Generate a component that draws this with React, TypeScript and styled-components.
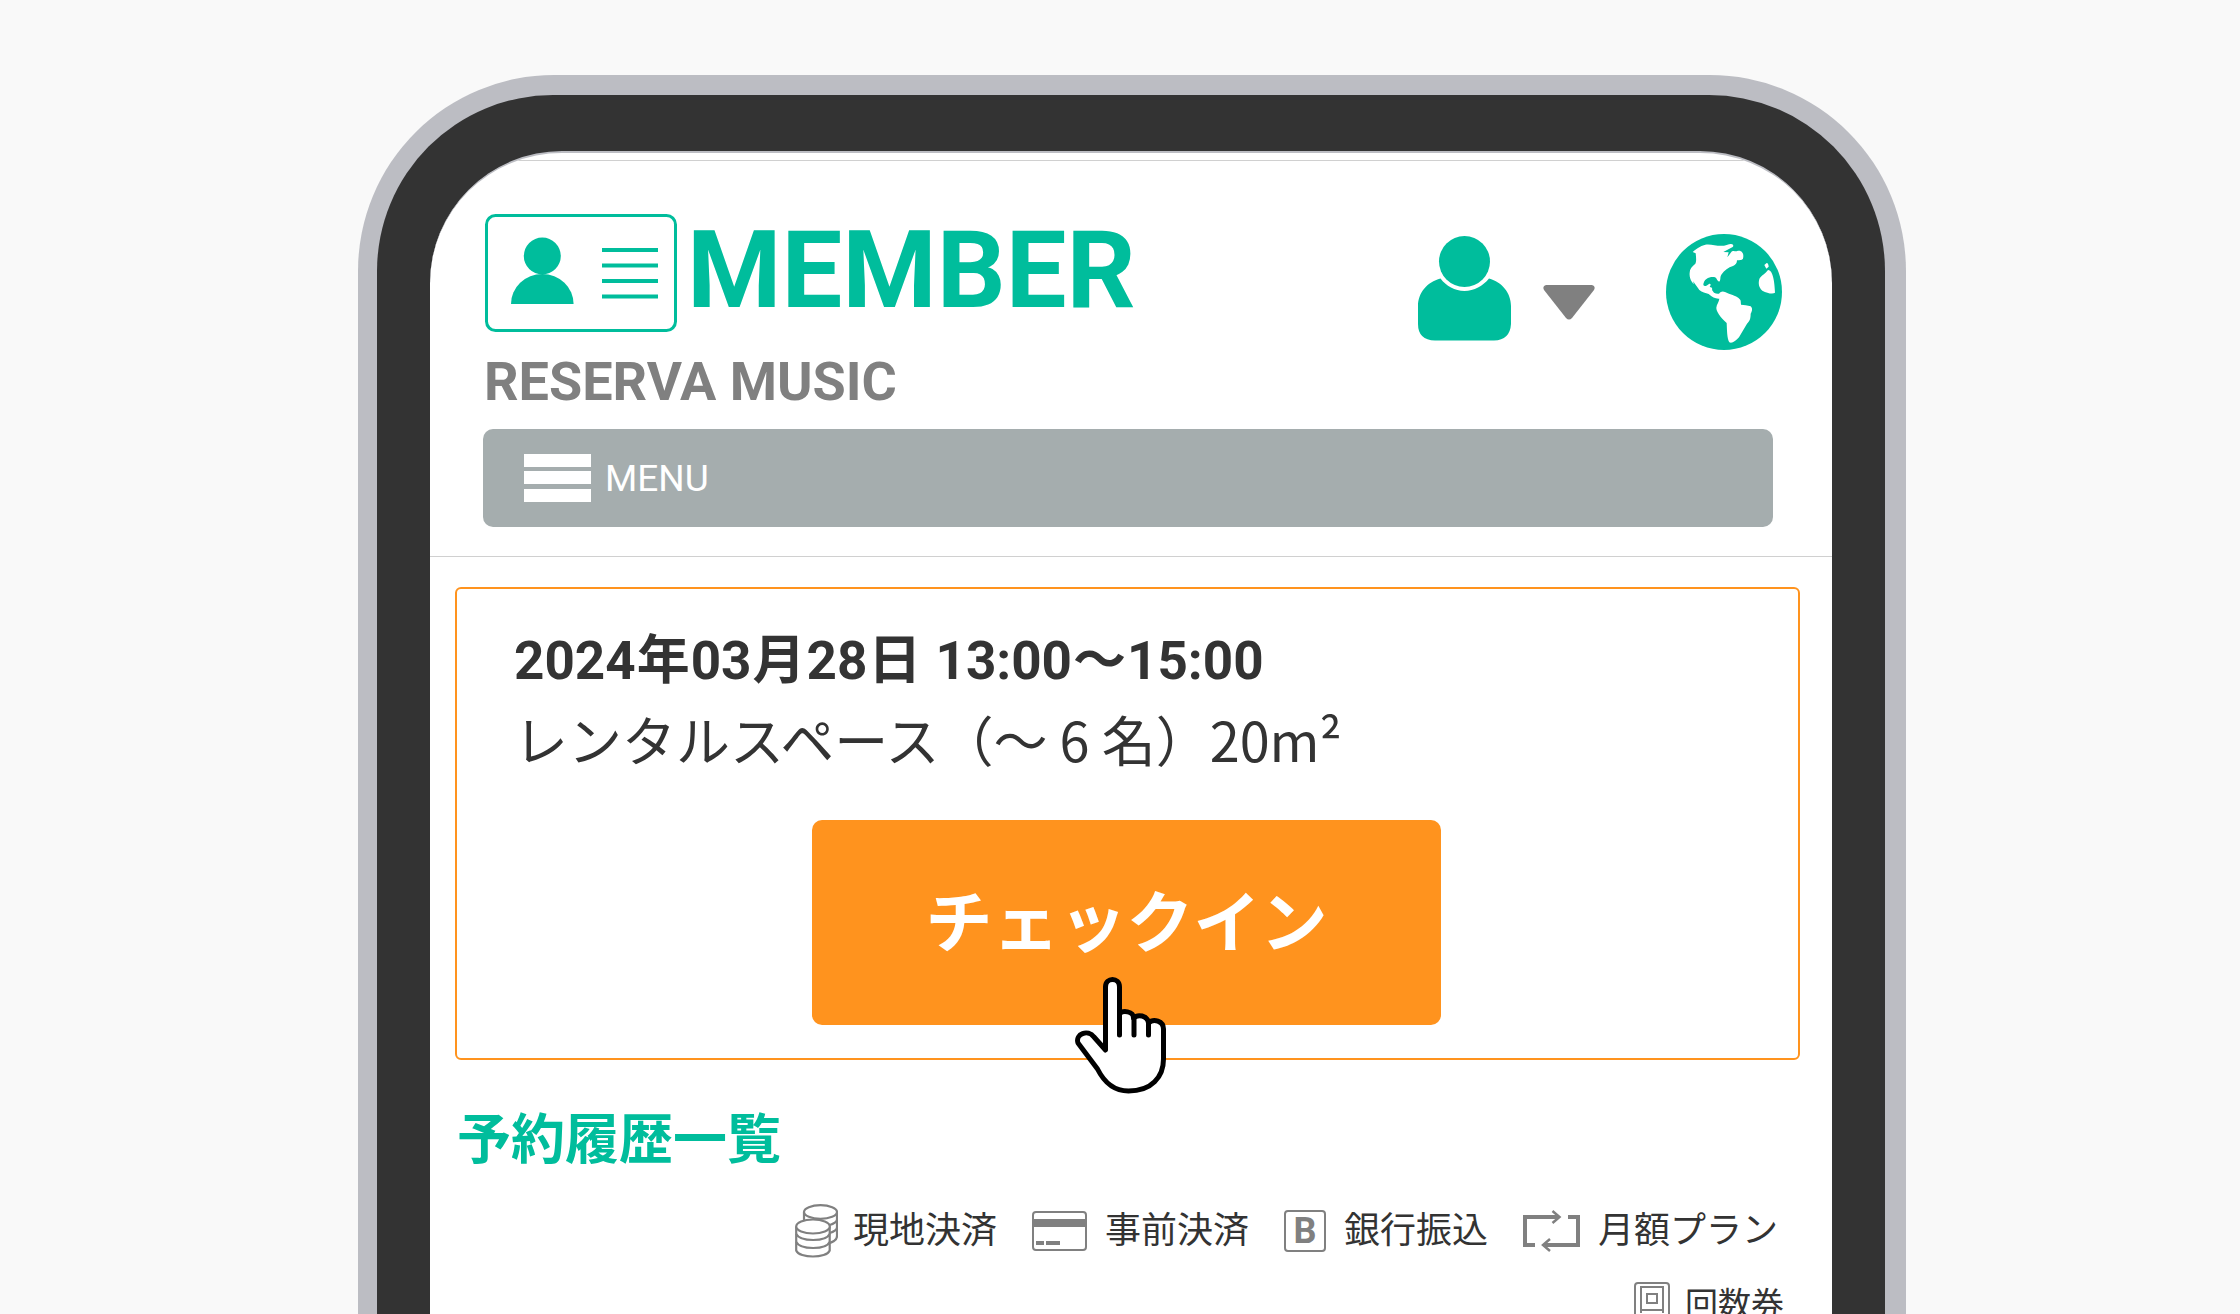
import React from "react";
import styled, { createGlobalStyle } from "styled-components";

const green = "#00bd9c";
const ink = "#333333";
const grey = "#808080";
const orange = "#ff931e";

const GlobalStyle = createGlobalStyle`
  * { box-sizing: border-box; }
  body {
    margin: 0;
    background: #f9f9f9;
    color: ${ink};
    font-family: Roboto, "Noto Sans CJK JP", sans-serif;
  }
  h1, h2, p, ul { margin: 0; padding: 0; }
  button { font: inherit; border: 0; padding: 0; background: none; cursor: pointer; }
  svg { display: block; }
`;

const Stage = styled.main`
  height: 100vh;
  overflow: hidden;
  display: flex;
  justify-content: center;
  padding: 75px 24px 0 48px;
`;

const Shell = styled.div`
  width: 100%;
  max-width: 1548px;
  height: 1600px;
  flex: 0 1 auto;
  padding: 20px 21px 0 19px;
  border-radius: 196px 196px 0 0;
  background: #bcbdc3;
`;

const Bezel = styled.div`
  height: 100%;
  padding: 56px 53px 0;
  border-radius: 176px 176px 0 0;
  background: ${ink};
`;

const Screen = styled.div`
  height: 100%;
  overflow: hidden;
  border-radius: 132px 132px 0 0;
  border-top: 2px solid #bcbdc3;
  background: #ffffff;
`;

const StatusStrip = styled.div`
  height: 8px;
  border-bottom: 1px solid #d0d0d0;
`;

const Header = styled.header`
  padding: 53px 59px 29px 53px;
  border-bottom: 1px solid #d0d0d0;
`;

const Brand = styled.div`
  display: flex;
  align-items: flex-start;
  padding-left: 2px;
`;

const Logo = styled.h1`
  margin-left: 10px;
  color: ${green};
  font-size: 108px;
  font-weight: 700;
  line-height: 112px;
`;

const Actions = styled.div`
  display: flex;
  align-items: flex-start;
  margin-left: auto;
  padding-top: 20px;
`;

const AccountButton = styled.button`
  display: flex;
  gap: 32px;
  align-items: flex-start;
  margin: 2px 71px 0 0;
`;

const Caret = styled.svg`
  margin-top: 49px;
`;

const GlobeButton = styled.button`
  margin-right: -9px;
`;

const ShopName = styled.p`
  margin: 0 0 15px 1px;
  color: ${grey};
  font-size: 54px;
  font-weight: 700;
  line-height: 64px;
`;

const MenuBar = styled.button`
  width: 100%;
  height: 98px;
  display: flex;
  align-items: center;
  gap: 14px;
  padding-left: 41px;
  border-radius: 10px;
  background: #a5adae;
  color: #ffffff;
  font-size: 37px;
`;

const Content = styled.div`
  padding: 30px 32px 0 25px;
`;

const Booking = styled.section`
  height: 473px;
  display: flex;
  flex-direction: column;
  padding: 38px 59px 0 57px;
  border: 2px solid ${orange};
  border-radius: 6px;
`;

const BookingTime = styled.p`
  font-size: 53px;
  font-weight: 700;
  line-height: 68px;
`;

const Unit = styled.span`
  margin: 0 1px;
`;

const BookingRoom = styled.p`
  margin-top: 10px;
  font-family: "Noto Sans CJK JP", sans-serif;
  font-size: 54px;
  line-height: 68px;
`;

const CheckIn = styled.button`
  position: relative;
  align-self: center;
  width: 629px;
  height: 205px;
  margin-top: 47px;
  padding-bottom: 10px;
  border-radius: 10px;
  background: ${orange};
  color: #ffffff;
  font-size: 67px;
  font-weight: 700;
`;

const Pointer = styled.svg`
  position: absolute;
  left: 263px;
  top: 157px;
`;

const ListTitle = styled.h2`
  margin: 47px 0 0 2px;
  color: ${green};
  font-size: 54px;
  font-weight: 700;
  line-height: 68px;
`;

const Legend = styled.ul`
  display: flex;
  flex-wrap: wrap;
  justify-content: flex-end;
  gap: 8px 35px;
  margin-top: 23px;
  padding: 0 22px 0 280px;
  list-style: none;
`;

const LegendItem = styled.li<{ $small?: boolean; $tight?: boolean }>`
  display: flex;
  align-items: center;
  gap: ${(p) => (p.$tight ? "15px" : "18px")};
  height: 66px;
  margin-right: ${(p) => (p.$small ? "-6px" : "0")};
  font-size: ${(p) => (p.$small ? "33px" : "36px")};
  line-height: 54px;
`;

function IdCard() {
  return (
    <svg width="192" height="118" viewBox="0 0 192 118" fill={green}>
      <rect x="1.5" y="1.5" width="189" height="115" rx="9" fill="none" stroke={green} strokeWidth="3" />
      <circle cx="57.3" cy="42" r="18.5" />
      <path d="M26 90a31.300 30 0 0 1 62.600 0z" />
      <path d="M117 34h56v4h-56zM117 49.500h56v4h-56zM117 65h56v4h-56zM117 80.500h56v4h-56z" />
    </svg>
  );
}

function Person() {
  return (
    <svg width="93" height="105" viewBox="0 0 93 105" fill={green}>
      <circle cx="46.500" cy="25.500" r="25.500" />
      <path d="M22.500 42.500C9 46 0 57 0 70v18q0 16 17 16.500h59q16-.5 17-16.500V70c0-13-9-24-22-27.500C65 50 56 55 46.500 55S28 50 22.500 42.500z" />
    </svg>
  );
}

function Globe() {
  return (
    <svg width="116" height="116" viewBox="0 0 348 348">
      <circle cx="174" cy="174" r="174" fill={green} />
      <g fill="#ffffff">
        <path d="M80 54c8-8 22-18 38-22 18-3 36 6 56 3 8-1 13-4 20-5 7-1 10 5 6 9l-28 15 16 1-4 15 12-16c4-6 10-2 16-2 8-3 13-1 16 3 4 4 5 10 3 19-4 5-10 4-18 5 0 9-4 14-12 17-14 4-26 13-34 25-6 8-2 14-6 21-7 4-7-12-17-13-12-2-32 5-32 24 3 6 10 3 17-3 6-3 6 4 2 9 6 0 9 4 7 9l6 8c5 3 10 4 15 3 5-7 12-8 18-5 8 4 16 7 23 9 8 3 22 10 24 17l1 12c8 2 20 1 29 5 7 7 4 14 0 22 0 15-3 22-11 30l-24 41c-9 11-21 19-29 15-7-10-7-38-8-58-9-8-32-31-31-46 1-11 8-17 9-27-12 1-21-5-32-14-9-4-20-4-28-12-7-11-14-17-18-26l1 9-5-7c-6-9-8-19-7-28 0-11 6-18 17-27 4-8 2-22 1-31z" />
        <path d="M302 87c4 0 6 6 6 11l-7 6-6-11zM306 108c9 1 13 12 16 24 3 13 4 26 5 44-6 5-23 2-38-6-13-11-12-27-8-37 6-10 17-13 25-25z" />
      </g>
    </svg>
  );
}

function Bars() {
  return (
    <svg width="67" height="48" viewBox="0 0 67 48" fill="#ffffff">
      <path d="M0 0h67v13H0zM0 17h67v13H0zM0 35h67v13H0z" />
    </svg>
  );
}

function Hand() {
  return (
    <Pointer width="92" height="117" viewBox="0 0 92 117" fill="#ffffff" stroke="#000000" strokeWidth="5" strokeLinecap="round" strokeLinejoin="round">
      <path d="M30.500 73V10c0-10 14-10 14 0v27c3-4 14-3 14 4 4-4 14-3 15 5 5-5 15-2 15 6v30c0 18-12 32-35 32-14 0-24-8-31-22L3 66c-3-9 10-14 16-6z" />
      <path d="M44.500 37v21M59 41v17M73.500 46v12" />
    </Pointer>
  );
}

function Coins() {
  return (
    <svg width="43" height="54" viewBox="0 0 43 54" fill="#ffffff" stroke={grey} strokeWidth="2.200">
      <path d="M9 8v28c8 6 24 5 30 1 2-1 3-3 3-5V8" />
      <path d="M9 16c4 8 30 8 33 0M9 24c4 8 30 8 33 0" />
      <ellipse cx="25.500" cy="8" rx="16.500" ry="6.800" />
      <path d="M1.200 22.500v24c3 8 30.500 8 33.500 0v-24" />
      <path d="M1.200 30c4 8 30 8 33.500 0M1.200 38c4 8 30 8 33.500 0" />
      <ellipse cx="18" cy="22.500" rx="16.800" ry="7" />
    </svg>
  );
}

function CreditCard() {
  return (
    <svg width="55" height="40" viewBox="0 0 55 40" fill={grey}>
      <rect x="1" y="1" width="53" height="38" rx="3" fill="none" stroke={grey} strokeWidth="2" />
      <path d="M1 8h53v8H1zM4 30h8v4H4zM14 30h14v4H14z" />
    </svg>
  );
}

const BankMark = styled.span`
  width: 42px;
  height: 42px;
  border: 2px solid ${grey};
  border-radius: 4px;
  color: ${grey};
  font-size: 36px;
  font-weight: 700;
  line-height: 38px;
  text-align: center;
`;

function Repeat() {
  return (
    <svg width="57" height="42" viewBox="0 0 57 42" fill="none" stroke={grey} strokeWidth="4">
      <path d="M12 35H2V7h33M45 7h10v28H22" />
      <path d="M29.500 1l7 6-7 6M27 29l-7 6 7 6" strokeWidth="2.500" />
    </svg>
  );
}

function Ticket() {
  return (
    <svg width="36" height="46" viewBox="0 0 36 46" fill="none" stroke={grey} strokeWidth="2">
      <rect x="1" y="1" width="34" height="44" rx="3" />
      <path d="M7 31V5h22v26M7 28h22M13 12h10v9H13z" />
    </svg>
  );
}

const legend = [
  { label: "現地決済", icon: <Coins />, tight: true },
  { label: "事前決済", icon: <CreditCard /> },
  { label: "銀行振込", icon: <BankMark>B</BankMark> },
  { label: "月額プラン", icon: <Repeat /> },
  { label: "回数券", icon: <Ticket />, small: true, tight: true },
];

export default function App() {
  return (
    <>
      <GlobalStyle />
      <Stage>
        <Shell>
          <Bezel>
            <Screen>
              <StatusStrip />
              <Header>
                <Brand>
                  <IdCard />
                  <Logo>MEMBER</Logo>
                  <Actions>
                    <AccountButton aria-label="アカウント">
                      <Person />
                      <Caret width="52" height="35" viewBox="0 0 52 35" fill={grey}>
                        <path d="M3 0h46q4 1 2 5L29 33q-3 3-6 0L1 5Q-1 1 3 0z" />
                      </Caret>
                    </AccountButton>
                    <GlobeButton aria-label="言語">
                      <Globe />
                    </GlobeButton>
                  </Actions>
                </Brand>
                <ShopName>RESERVA MUSIC</ShopName>
                <MenuBar>
                  <Bars />
                  MENU
                </MenuBar>
              </Header>
              <Content>
                <Booking>
                  <BookingTime>
                    2024<Unit>年</Unit>03<Unit>月</Unit>28<Unit>日</Unit> 13:00<Unit>〜</Unit>15:00
                  </BookingTime>
                  <BookingRoom>レンタルスペース（〜 6 名）20m²</BookingRoom>
                  <CheckIn>
                    チェックイン
                    <Hand />
                  </CheckIn>
                </Booking>
                <ListTitle>予約履歴一覧</ListTitle>
                <Legend>
                  {legend.map((item) => (
                    <LegendItem key={item.label} $small={item.small} $tight={item.tight}>
                      {item.icon}
                      {item.label}
                    </LegendItem>
                  ))}
                </Legend>
              </Content>
            </Screen>
          </Bezel>
        </Shell>
      </Stage>
    </>
  );
}
